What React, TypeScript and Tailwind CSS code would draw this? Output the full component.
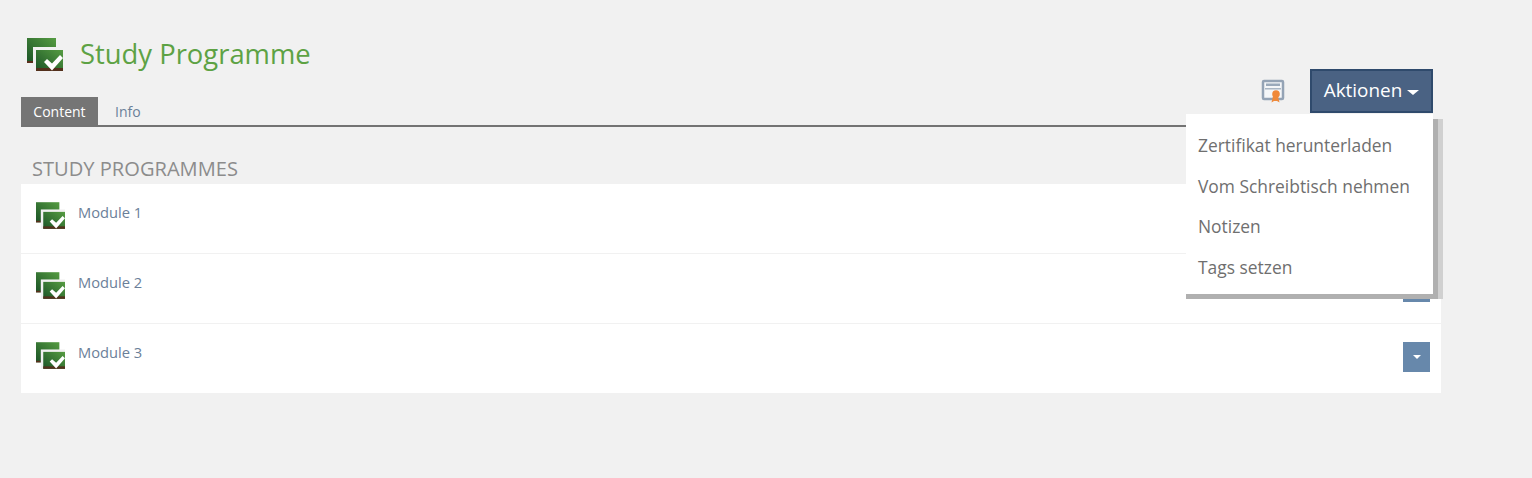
import React from 'react';

const ProgrammeIcon = ({ size, id }: { size: number; id: string }) => (
  <svg width={size} height={Math.round((size * 33) / 36)} viewBox="0 0 36 33" className="shrink-0">
    <defs>
      <linearGradient id={id} x1="0" y1="1" x2="1" y2="0">
        <stop offset="0" stopColor="#1a5326" />
        <stop offset="1" stopColor="#569c42" />
      </linearGradient>
    </defs>
    <rect x="0" y="0" width="29" height="25" fill={`url(#${id})`} />
    <rect x="0" y="23" width="6" height="2" fill="#5a2f1c" />
    <rect x="6" y="9" width="30" height="24" fill="#f1f1f1" />
    <rect x="9" y="12" width="27" height="21" fill={`url(#${id})`} />
    <rect x="9" y="30" width="27" height="3" fill="#53301c" />
    <path d="M17 24l3-3 5 4.500 8-8.500 3 3-11 12.500z" fill="#fff" />
  </svg>
);

const CertificateIcon = () => (
  <svg width="24" height="24" viewBox="0 0 24 24" className="shrink-0">
    <rect x="2" y="2" width="20" height="18" rx="1" fill="#f4f6f8" stroke="#94a3b5" strokeWidth="2.5" />
    <rect x="5" y="4.500" width="14" height="2.500" fill="#9aa9ba" />
    <rect x="4" y="9" width="16" height="1.500" fill="#a9b6c4" />
    <path d="M12 17l-1.500 6.500 2.500-1.500 1.500 0 1.500 0 2.500 1.500-1.500-6.500z" fill="#ee8a3c" />
    <circle cx="15" cy="15" r="3.800" fill="#f0893a" />
  </svg>
);

const modules = ['Module 1', 'Module 2', 'Module 3'];
const menuItems = ['Zertifikat herunterladen', 'Vom Schreibtisch nehmen', 'Notizen', 'Tags setzen'];

const App: React.FC = () => {
  return (
    <div className="relative h-[478px] w-[1532px] overflow-hidden bg-[#f1f1f1] font-['Open_Sans',sans-serif]">
      <div className="pl-[21px] pr-[91px] pt-[38px]">
        <div className="flex h-[33px] items-center gap-[17px] pl-[6px]">
          <ProgrammeIcon size={36} id="head-icon" />
          <h1 className="mt-[-2px] text-[27.4px] leading-[33px] text-[#5da244]">Study Programme</h1>
        </div>

        <div className="mt-[26px] flex h-[30px] border-b-2 border-[#737373]">
          <div className="flex w-[77px] items-center justify-center bg-[#757575] pt-[1px] text-[14px] text-white">Content</div>
          <div className="flex items-center pl-[17px] pt-[1px] text-[14px] text-[#6b7f99]">Info</div>
        </div>

        <h2 className="mt-[28px] pb-[1px] pl-[11px] text-[20.1px] leading-[28px] text-[#8c8c8c]">STUDY PROGRAMMES</h2>

        <ul className="bg-white">
          {modules.map((name, i) => (
            <li
              key={name}
              className={`flex items-start pl-[15px] pr-[11px] pt-[18px] ${i < 2 ? 'h-[70px] border-b border-[#f1f1f1]' : 'h-[69px]'}`}
            >
              <ProgrammeIcon size={29} id={`row-icon-${i}`} />
              <span className="ml-[13px] text-[14.7px] leading-[20px] text-[#6b7f99]">{name}</span>
              <button className="ml-auto flex h-[30px] w-[27px] items-center justify-center bg-[#6788ab]">
                <span className="border-x-[4px] border-t-[4px] border-x-transparent border-t-white" />
              </button>
            </li>
          ))}
        </ul>
      </div>

      {/* actions dropdown lies over the list */}
      <div className="absolute left-[1186px] top-[62px] w-[247px]">
        <div className="flex h-[52px] items-start justify-end bg-[#f1f1f1] pt-[7px]">
          <div className="mr-[25px] mt-[10px]">
            <CertificateIcon />
          </div>
          <button className="flex h-[44px] w-[123px] items-center justify-center gap-[5px] border-2 border-[#2f4a6c] bg-[#4a6283] pb-[2px] text-[18.9px] text-white">
            Aktionen
            <span className="mt-[4px] border-x-[6px] border-t-[5px] border-x-transparent border-t-white" />
          </button>
        </div>
        <div className="flex h-[180px] flex-col bg-white pl-[12px] pt-[11px] shadow-[0_5px_0_#b0b0b0,5px_5px_0_#b0b0b0,10px_5px_0_#d0d0d0]">
          {menuItems.map((item) => (
            <div key={item} className="flex h-[40.6px] shrink-0 items-center text-[17.4px] text-[#6f6f6f]">
              {item}
            </div>
          ))}
        </div>
      </div>
    </div>
  );
};

export default App;
